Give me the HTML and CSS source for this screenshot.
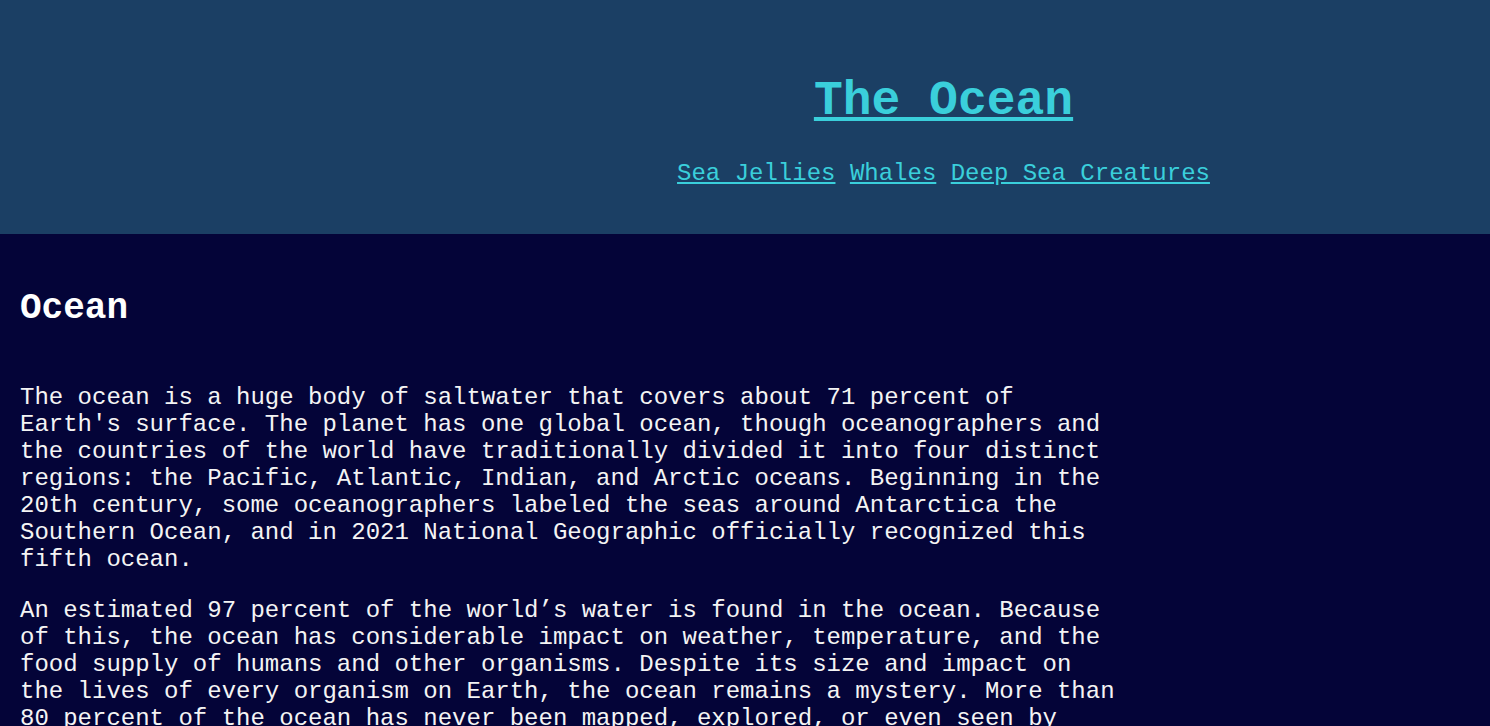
FILE: index.html
```html
<!DOCTYPE html>
<html lang="en">
<head>
<meta charset="utf-8">
<title>The Ocean</title>
<link rel="stylesheet" href="styles.css">
</head>
<body>
<header class="site-header">
  <h1 class="site-title"><a href="#">The Ocean</a></h1>
  <nav class="site-nav">
    <a href="#">Sea Jellies</a> <a href="#">Whales</a> <a href="#">Deep Sea Creatures</a>
  </nav>
</header>
<main class="content">
  <h2 class="section-title">Ocean</h2>
  <div class="text">
    <p>The ocean is a huge body of saltwater that covers about 71 percent of Earth's surface. The planet has one global ocean, though oceanographers and the countries of the world have traditionally divided it into four distinct regions: the Pacific, Atlantic, Indian, and Arctic oceans. Beginning in the 20th century, some oceanographers labeled the seas around Antarctica the Southern Ocean, and in 2021 National Geographic officially recognized this fifth ocean.</p>
    <p>An estimated 97 percent of the world’s water is found in the ocean. Because of this, the ocean has considerable impact on weather, temperature, and the food supply of humans and other organisms. Despite its size and impact on the lives of every organism on Earth, the ocean remains a mystery. More than 80 percent of the ocean has never been mapped, explored, or even seen by humans.</p>
  </div>
</main>
</body>
</html>
```

FILE: styles.css
```css
html, body {
  margin: 0;
  padding: 0;
}

body {
  font-family: "Liberation Mono", "Courier New", monospace;
  background: #040438;
  color: #f4f4f4;
  min-height: 100vh;
}

.site-header {
  background: #1b3f64;
  padding: 74px 0 47px 397px;
  text-align: center;
}

.site-title {
  margin: 0;
  font-size: 48px;
  line-height: 54px;
  font-weight: bold;
}

.site-title a,
.site-nav a {
  color: #3acfdb;
  text-decoration: underline;
}

.site-nav {
  margin-top: 32px;
  font-size: 24px;
  line-height: 27px;
}

.content {
  padding: 54px 20px 0;
}

.section-title {
  margin: 0 0 55px;
  font-size: 36px;
  font-weight: bold;
  color: #ffffff;
}

.text {
  max-width: 1100px;
}

.text p {
  margin: 0 0 24px;
  font-size: 24px;
  line-height: 27px;
}
```
